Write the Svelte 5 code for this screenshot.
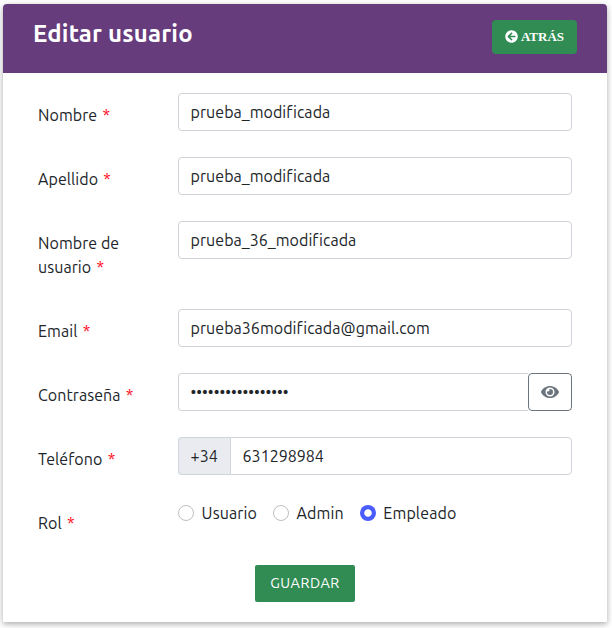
<script>
  const fields = [
    { id: 'nombre', label: 'Nombre', value: 'prueba_modificada' },
    { id: 'apellido', label: 'Apellido', value: 'prueba_modificada' },
    { id: 'usuario', label: 'Nombre de usuario', value: 'prueba_36_modificada' },
    { id: 'email', label: 'Email', value: 'prueba36modificada@gmail.com' }
  ];
  const roles = ['Usuario', 'Admin', 'Empleado'];
  let role = $state('Empleado');
  let visible = $state(false);
</script>

<main>
<form class="card" onsubmit={(e) => e.preventDefault()}>
  <header>
    <h1>Editar usuario</h1>
    <button type="button" class="back">
      <svg width="13" height="13" viewBox="0 0 512 512" fill="currentColor"><path d="M256 504C119 504 8 393 8 256S119 8 256 8s248 111 248 248-111 248-248 248zm28.900-143.600L209.400 288H392c13.300 0 24-10.700 24-24v-16c0-13.300-10.700-24-24-24H209.400l75.500-72.400c9.700-9.300 9.900-24.800.4-34.300l-11-10.900c-9.400-9.400-24.600-9.400-33.900 0L107.700 239c-9.400 9.400-9.400 24.600 0 33.900l132.700 132.700c9.400 9.400 24.600 9.400 33.900 0l11-10.900c9.500-9.500 9.300-25-.4-34.300z" /></svg>
      <span>ATRÁS</span>
    </button>
  </header>

  <div class="body">
    {#each fields as f}
      <div class="row">
        <label for={f.id}>{f.label} <span class="req">*</span></label>
        <input id={f.id} value={f.value} />
      </div>
    {/each}

    <div class="row">
      <label for="pass">Contraseña <span class="req">*</span></label>
      <div class="group">
        <input id="pass" class="pass" type={visible ? 'text' : 'password'} value="prueba_modificada" />
        <button type="button" class="eye" aria-label="Mostrar" onclick={() => (visible = !visible)}>
          <svg width="18" height="16" viewBox="0 0 576 512" fill="currentColor"><path d="M572.520 241.400C518.290 135.590 410.930 64 288 64S57.680 135.640 3.480 241.410a32.350 32.350 0 0 0 0 29.190C57.710 376.410 165.070 448 288 448s230.320-71.640 284.520-177.410a32.350 32.350 0 0 0 0-29.190zM288 400a144 144 0 1 1 144-144 143.930 143.930 0 0 1-144 144zm0-240a95.310 95.310 0 0 0-25.310 3.790 47.850 47.850 0 0 1-66.900 66.900A95.780 95.780 0 1 0 288 160z" /></svg>
        </button>
      </div>
    </div>

    <div class="row">
      <label for="tel">Teléfono <span class="req">*</span></label>
      <div class="group">
        <span class="prefix">+34</span>
        <input id="tel" class="tel" value="631298984" />
      </div>
    </div>

    <div class="row role">
      <span class="label">Rol <span class="req">*</span></span>
      <div class="options">
        {#each roles as r}
          <label class="option"><input type="radio" name="rol" value={r} bind:group={role} /><span>{r}</span></label>
        {/each}
      </div>
    </div>

    <button class="save">GUARDAR</button>
  </div>
</form>
</main>

<style>
  :global(body) { background: #fff; }
  main { box-sizing: border-box; height: 628px; padding: 4px 0 0 3px; overflow: hidden; }
  .card, .card input, .save { font-family: Ubuntu, 'Noto Sans', sans-serif; }
  .card {
    box-sizing: border-box;
    width: 604px;
    height: 618px;
    background: #fff;
    border-radius: 4px 4px 1px 1px;
    box-shadow: 0 2px 5px rgba(0, 0, 0, 0.22), 0 2px 10px rgba(0, 0, 0, 0.14);
    color: #212529;
    font-size: 16px;
    line-height: 24px;
    letter-spacing: 0.06px;
  }
  header {
    box-sizing: border-box;
    height: 69px;
    padding: 15px 30px 0;
    display: flex;
    justify-content: space-between;
    align-items: flex-start;
    background: #663c7c;
    border-radius: 4px 4px 0 0;
  }
  h1 { margin: 0; color: #fff; font-size: 24px; line-height: 29px; font-weight: 700; letter-spacing: 0.200px; }
  .back {
    box-sizing: border-box;
    width: 85px;
    height: 34px;
    margin-top: 1px;
    padding: 0 0 1px;
    display: flex;
    align-items: center;
    justify-content: center;
    gap: 3px;
    border: 0;
    border-radius: 4px;
    background: #318c54;
    color: #fff;
    font: 700 13px 'Liberation Serif', serif;
  }
  .body { padding: 20px 35px 0; display: flex; flex-direction: column; }
  .row { display: grid; grid-template-columns: 110px 394px; column-gap: 30px; align-items: start; margin-bottom: 26px; }
  .row > label, .label { padding: 10px 0 4px; }
  .req { margin-left: 1.500px; color: #ff0a24; }
  .row input:not([type='radio']) {
    box-sizing: border-box;
    width: 100%;
    min-width: 0;
    height: 38px;
    padding: 6px 11.600px;
    border: 1px solid #ced4da;
    border-radius: 4px;
    background: #fff;
    color: #212529;
    font-size: 16px;
    line-height: 24px;
    letter-spacing: 0.040px;
    outline: none;
  }
  .group { display: flex; }
  .row .pass:not([type='radio']) { border-right: 0; border-radius: 4px 0 0 4px; letter-spacing: 0; }
  .row .tel:not([type='radio']) { border-radius: 0 4px 4px 0; letter-spacing: 0; }
  .eye {
    box-sizing: border-box;
    flex: 0 0 44px;
    height: 38px;
    padding: 0;
    display: grid;
    place-items: center;
    border: 1px solid #6c757d;
    border-radius: 4px;
    background: #fff;
    color: #6c757d;
  }
  .prefix {
    box-sizing: border-box;
    flex: 0 0 52px;
    height: 38px;
    padding: 6px 0 6px 11.600px;
    border: 1px solid #ced4da;
    border-right: 0;
    border-radius: 4px 0 0 4px;
    background: #e9ebf0;
  }
  .role { height: 38px; }
  .options { display: flex; gap: 16px; }
  .option { display: flex; align-items: center; gap: 7.600px; letter-spacing: 0.12px; }
  .option input {
    appearance: none;
    box-sizing: border-box;
    width: 16px;
    height: 16px;
    margin: 0;
    border: 1px solid #bfbfbf;
    border-radius: 50%;
    background: #fff;
  }
  .option input:checked { border: 0; background: radial-gradient(circle, #fff 3.300px, #4a5cfb 4.100px); }
  .save {
    box-sizing: border-box;
    align-self: center;
    width: 100px;
    height: 37px;
    padding: 0 0 1px;
    border: 0;
    border-radius: 2px;
    background: #318c54;
    color: #fff;
    font-size: 14.400px;
    letter-spacing: 0.5px;
  }
</style>
